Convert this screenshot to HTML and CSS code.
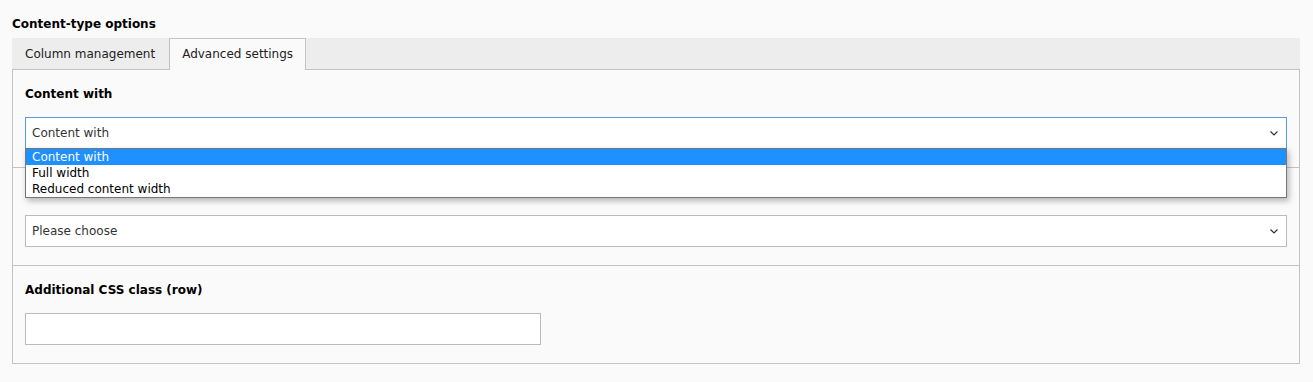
FILE: index.html
```html
<!DOCTYPE html>
<html lang="en">
<head>
<meta charset="utf-8">
<title>Content-type options</title>
<link rel="stylesheet" href="styles.css">
</head>
<body>
<div class="page">
  <h2 class="title">Content-type options</h2>
  <div class="tabs">
    <div class="tab">Column management</div>
    <div class="tab tab-active">Advanced settings</div>
  </div>
  <div class="panel">
    <div class="section">
      <label class="label">Content with</label>
      <div class="select-wrap">
        <div class="select select-focus">
          <span>Content with</span>
          <svg class="chevron" width="8" height="5" viewBox="0 0 8 5"><path d="M0.5 0.5 L4 4 L7.5 0.5" fill="none" stroke="#333" stroke-width="1.2"/></svg>
        </div>
        <ul class="dropdown">
          <li class="option option-selected">Content with</li>
          <li class="option">Full width</li>
          <li class="option">Reduced content width</li>
        </ul>
      </div>
    </div>
    <div class="section">
      <label class="label label-covered" aria-hidden="true"></label>
      <div class="select">
        <span>Please choose</span>
        <svg class="chevron" width="8" height="5" viewBox="0 0 8 5"><path d="M0.5 0.5 L4 4 L7.5 0.5" fill="none" stroke="#333" stroke-width="1.2"/></svg>
      </div>
    </div>
    <div class="section">
      <label class="label">Additional CSS class (row)</label>
      <input class="text-input" type="text">
    </div>
  </div>
</div>
</body>
</html>
```

FILE: styles.css
```css
* { box-sizing: border-box; }
html, body { margin: 0; padding: 0; }
body {
  background: #fafafa;
  font-family: "DejaVu Sans", Verdana, sans-serif;
  font-size: 12px;
  color: #212121;
}
.page {
  padding: 15px 13px 0 12px;
}
.title {
  margin: 0 0 5px 0;
  font-size: 12px;
  line-height: 18px;
  font-weight: bold;
  color: #000;
}
.tabs {
  display: flex;
  background: #ededed;
  height: 31px;
  position: relative;
  z-index: 1;
}
.tab {
  height: 31px;
  line-height: 29px;
  padding: 2px 14px 0 13px;
  color: #212121;
  white-space: nowrap;
}
.tab-active {
  height: 32px;
  padding: 1px 12px 0;
  background: #fafafa;
  border: 1px solid #c3c3c3;
  border-bottom: none;
}
.panel {
  border: 1px solid #c3c3c3;
  background: #fafafa;
}
.section {
  padding: 15px 12px 18px;
  border-top: 1px solid #c3c3c3;
}
.section:first-child { border-top: none; }
.label {
  display: block;
  font-weight: bold;
  line-height: 18px;
  height: 18px;
  margin-bottom: 14px;
  color: #000;
}
.select-wrap {
  position: relative;
}
.select {
  display: flex;
  align-items: center;
  justify-content: space-between;
  height: 32px;
  padding: 0 8px 0 6px;
  background: #fff;
  border: 1px solid #bbb;
  color: #333;
}
.select-focus {
  border-color: #5b9bd5;
}
.chevron { display: block; }
.dropdown {
  position: absolute;
  left: 0;
  right: 0;
  top: calc(100% - 1px);
  margin: 0;
  padding: 0;
  list-style: none;
  background: #fff;
  border: 1px solid #767676;
  box-shadow: 2px 3px 6px rgba(0, 0, 0, 0.28);
  z-index: 5;
}
.option {
  height: 16px;
  line-height: 15px;
  padding: 1px 0 0 6px;
  color: #000;
}
.option-selected {
  background: #1e90ff;
  color: #fff;
}
.text-input {
  display: block;
  width: 516px;
  height: 32px;
  margin: 0;
  border: 1px solid #bbb;
  background: #fff;
  font: inherit;
}
```
